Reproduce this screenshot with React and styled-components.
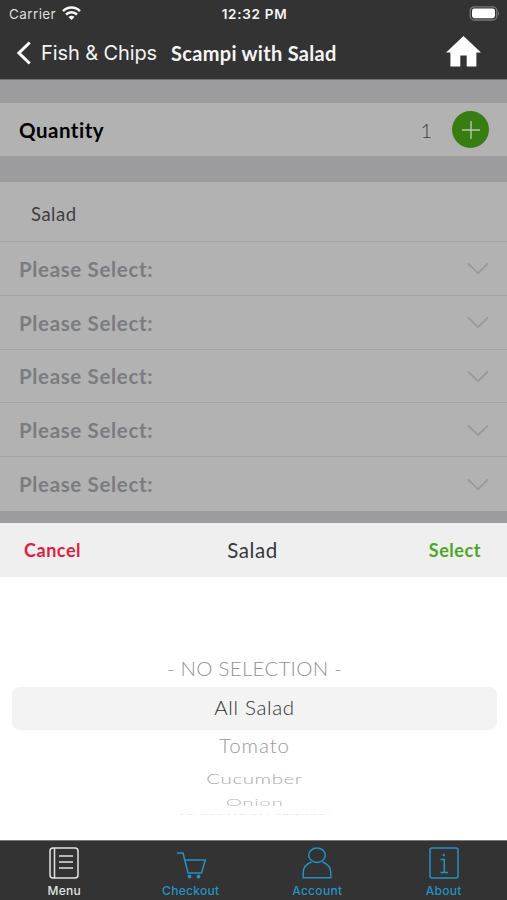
import styled, { createGlobalStyle } from "styled-components";

const GlobalStyle = createGlobalStyle`
  * {
    box-sizing: border-box;
  }

  body {
    margin: 0;
    background: #333333;
  }

  button {
    border: 0;
    padding: 0;
    background: none;
    font: inherit;
    color: inherit;
  }
`;

const Screen = styled.div`
  width: 507px;
  height: 900px;
  display: flex;
  flex-direction: column;
  overflow: hidden;
  background: #333333;
  font-family: Lato, "Liberation Sans", sans-serif;
`;

const Header = styled.header`
  height: 80px;
  flex: none;
  background: #333333;
  border-bottom: 1px solid #707070;
  color: #f5f5f5;
  font-family: Inter, "Liberation Sans", sans-serif;
`;

const StatusBar = styled.div`
  height: 27px;
  padding: 0 7px 0 9px;
  display: grid;
  grid-template-columns: 1fr auto 1fr;
  align-items: center;
  font-size: 13px;
`;

const Carrier = styled.div`
  display: flex;
  align-items: center;
  gap: 6px;
  color: #dedede;
  font-size: 13.5px;
  letter-spacing: 0.4px;
`;

const Time = styled.div`
  font-size: 13.5px;
  font-weight: 600;
  letter-spacing: 0.7px;
`;

const Battery = styled.svg`
  justify-self: end;
`;

const NavBar = styled.nav`
  height: 52px;
  padding: 0 26px 0 17px;
  display: flex;
  align-items: center;
`;

const BackButton = styled.button`
  display: flex;
  align-items: center;
  gap: 10px;
  font-size: 20px;
  letter-spacing: -0.1px;
  white-space: nowrap;
`;

const PageTitle = styled.h1`
  margin: 0 auto 0 14px;
  font-family: Lato, "Liberation Sans", sans-serif;
  font-size: 20px;
  font-weight: 700;
  letter-spacing: 0.3px;
`;

const HomeIcon = styled.svg`
  margin-bottom: 3px;
`;

const Main = styled.main`
  height: 443px;
  flex: none;
  padding-top: 23px;
  background: #9c9c9f;
`;

const QuantityRow = styled.div`
  height: 53px;
  margin-bottom: 26px;
  padding: 0 18px 0 19px;
  display: flex;
  align-items: center;
  background: #b2b2b2;
`;

const QuantityLabel = styled.div`
  flex: 1;
  color: #000000;
  font-size: 20.5px;
  font-weight: 700;
  letter-spacing: 0.5px;
`;

const QuantityValue = styled.div`
  margin-right: 20px;
  color: #404040;
  font-size: 20px;
  font-weight: 300;
`;

const AddButton = styled.button`
  width: 37px;
  height: 37px;
  display: grid;
  place-items: center;
  border-radius: 50%;
  background: #377d12;
`;

const OptionGroup = styled.section`
  background: #b2b2b2;
`;

const GroupTitle = styled.h2`
  height: 60px;
  margin: 0;
  padding: 5px 0 0 31px;
  display: flex;
  align-items: center;
  border-bottom: 1px solid #a4a4a5;
  color: #404041;
  font-size: 18.5px;
  font-weight: 400;
  letter-spacing: 0.5px;
`;

const OptionRow = styled.div`
  height: 53.75px;
  padding: 1px 18px 0 19px;
  display: flex;
  align-items: center;
  justify-content: space-between;
  border-bottom: 1px solid #a4a4a5;
  color: #7a7c80;
  font-size: 20.5px;
  font-weight: 700;
  letter-spacing: 0.65px;

  &:last-child {
    border-bottom: 0;
  }
`;

const Sheet = styled.section`
  height: 317px;
  flex: none;
  background: #ffffff;
`;

const SheetHeader = styled.div`
  height: 54px;
  padding: 0 26px 0 24px;
  display: grid;
  grid-template-columns: 1fr auto 1fr;
  align-items: center;
  background: #efefef;
  font-size: 18px;
`;

const SheetTitle = styled.div`
  color: #37373a;
  font-size: 20.5px;
  letter-spacing: 0.6px;
`;

const SheetAction = styled.button`
  justify-self: ${(props) => props.$side};
  color: ${(props) => props.$color};
  font-weight: 700;
  letter-spacing: 0.55px;
`;

const Picker = styled.ul`
  margin: 0;
  padding: 73px 10px 0 12px;
  list-style: none;
`;

const PickerItem = styled.li`
  height: ${(props) => props.$height}px;
  padding-bottom: ${(props) => (props.$selected ? 2 : 0)}px;
  display: flex;
  align-items: center;
  justify-content: center;
  border-radius: 8px;
  background: ${(props) => (props.$selected ? "#f3f3f3" : "transparent")};
  color: ${(props) => props.$color};
  font-size: 20.5px;
  font-weight: 300;
  letter-spacing: ${(props) => props.$spacing}px;
  line-height: 1;
  white-space: nowrap;

  span {
    transform: scaleY(${(props) => props.$squash});
  }
`;

const TabBar = styled.nav`
  height: 60px;
  flex: none;
  padding-left: 1px;
  display: grid;
  grid-template-columns: repeat(4, 1fr);
  border-top: 1px solid #777777;
  background: #333333;
  font-family: Inter, "Liberation Sans", sans-serif;
`;

const Tab = styled.button`
  padding-top: 5px;
  display: flex;
  flex-direction: column;
  align-items: center;
  gap: 3px;
  color: ${(props) => (props.$active ? "#e2e2e2" : "#2492c4")};
  font-size: 12px;
  font-weight: 500;
  line-height: 15px;
  letter-spacing: 0.3px;
`;

const TabIcon = styled.svg`
  width: 32px;
  height: 34px;
  fill: none;
  stroke: currentColor;
  stroke-width: 1.5;
`;

const pickerItems = [
  { label: "- NO SELECTION -", height: 37, color: "#929292", squash: 1, spacing: 0.25 },
  { label: "All Salad", height: 43, color: "#303032", squash: 1, spacing: 0.65, selected: true },
  { label: "Tomato", height: 33, color: "#989898", squash: 0.92, spacing: 0.9 },
  { label: "Cucumber", height: 31, color: "#a8a8a8", squash: 0.7, spacing: 0.6 },
  { label: "Onion", height: 17, color: "#b8b8b8", squash: 0.45, spacing: 0.6 },
  { label: "Pickled Red Cabbage", height: 7, color: "#d8d8d8", squash: 0.1, spacing: -1.8 },
];

function WifiIcon() {
  return (
    <svg width="19" height="15" viewBox="0 0 19 15" fill="none" stroke="#f8f8f8" strokeWidth="2.5">
      <path d="M1 5.2C5.8.4 13.2.4 18 5.2" />
      <path d="M4 8.5c3.2-3.1 7.8-3.1 11 0" />
      <path d="M9.5 14 6.5 11c1.7-1.7 4.3-1.7 6 0z" fill="#f8f8f8" stroke="none" />
    </svg>
  );
}

function Chevron() {
  return (
    <svg width="22" height="13" viewBox="0 0 22 13" fill="none" stroke="#9a9a9b" strokeWidth="1.8">
      <path d="m1 1.5 10 9.7 10-9.7" />
    </svg>
  );
}

function MenuIcon() {
  return (
    <TabIcon viewBox="0 0 32 34">
      <rect x="2" y="2" width="28" height="30" rx="3" />
      <path d="M6.5 2v30M11 10h14M11 16h14M11 22h14" />
    </TabIcon>
  );
}

function CartIcon() {
  return (
    <TabIcon viewBox="0 0 32 34">
      <path d="M2 7h6l5 20h13.5l3.8-13H9.7" />
      <circle cx="14.5" cy="30.5" r="1.2" fill="currentColor" />
      <circle cx="23.5" cy="30.5" r="1.2" fill="currentColor" />
    </TabIcon>
  );
}

function AccountIcon() {
  return (
    <TabIcon viewBox="0 0 32 34">
      <ellipse cx="16" cy="9.2" rx="8.3" ry="7.2" />
      <path d="M10.5 16C5 18 2.2 22 2.2 27v4.8h27.6V27c0-5-2.8-9-8.3-11" />
    </TabIcon>
  );
}

function AboutIcon() {
  return (
    <TabIcon viewBox="0 0 32 34">
      <rect x="2" y="2" width="28" height="30" rx="2" />
      <path d="M12.5 13.5h3.8V26M12.5 26.5H20" />
      <circle cx="15.8" cy="9" r="1.2" fill="currentColor" stroke="none" />
    </TabIcon>
  );
}

function App() {
  return (
    <Screen>
      <GlobalStyle />
      <Header>
        <StatusBar>
          <Carrier>
            Carrier
            <WifiIcon />
          </Carrier>
          <Time>12:32 PM</Time>
          <Battery width="31" height="15" viewBox="0 0 31 15">
            <rect x="1.2" y="0.8" width="26.6" height="13.2" rx="4" fill="none" stroke="#777777" strokeWidth="1.3" />
            <rect x="3" y="2.6" width="23" height="9.6" rx="2.4" fill="#ffffff" />
            <path d="M29 5v5q2-2.5 0-5" fill="#777777" />
          </Battery>
        </StatusBar>
        <NavBar>
          <BackButton>
            <svg width="14" height="24" viewBox="0 0 14 24" fill="none" stroke="#ffffff" strokeWidth="3">
              <path d="M12.7 1.5 2 12l10.7 10.5" />
            </svg>
            Fish &amp; Chips
          </BackButton>
          <PageTitle>Scampi with Salad</PageTitle>
          <HomeIcon width="35" height="31" viewBox="0 0 36 32" fill="#ffffff">
            <path d="M18 0 0 17h4.5v14.5h10.2V20h6.6v11.5h10V17H36z" />
          </HomeIcon>
        </NavBar>
      </Header>

      <Main>
        <QuantityRow>
          <QuantityLabel>Quantity</QuantityLabel>
          <QuantityValue>1</QuantityValue>
          <AddButton>
            <svg width="18" height="18" viewBox="0 0 18 18" stroke="#b9c5b2" strokeWidth="1.4">
              <path d="M9 0v18M0 9h18" />
            </svg>
          </AddButton>
        </QuantityRow>
        <OptionGroup>
          <GroupTitle>Salad</GroupTitle>
          {[1, 2, 3, 4, 5].map((slot) => (
            <OptionRow key={slot}>
              Please Select:
              <Chevron />
            </OptionRow>
          ))}
        </OptionGroup>
      </Main>

      <Sheet>
        <SheetHeader>
          <SheetAction $side="start" $color="#dc1f40">Cancel</SheetAction>
          <SheetTitle>Salad</SheetTitle>
          <SheetAction $side="end" $color="#4ea523">Select</SheetAction>
        </SheetHeader>
        <Picker>
          {pickerItems.map((item) => (
            <PickerItem
              key={item.label}
              $height={item.height}
              $color={item.color}
              $squash={item.squash}
              $spacing={item.spacing}
              $selected={item.selected}
            >
              <span>{item.label}</span>
            </PickerItem>
          ))}
        </Picker>
      </Sheet>

      <TabBar>
        <Tab $active>
          <MenuIcon />
          Menu
        </Tab>
        <Tab>
          <CartIcon />
          Checkout
        </Tab>
        <Tab>
          <AccountIcon />
          Account
        </Tab>
        <Tab>
          <AboutIcon />
          About
        </Tab>
      </TabBar>
    </Screen>
  );
}

export default App;
